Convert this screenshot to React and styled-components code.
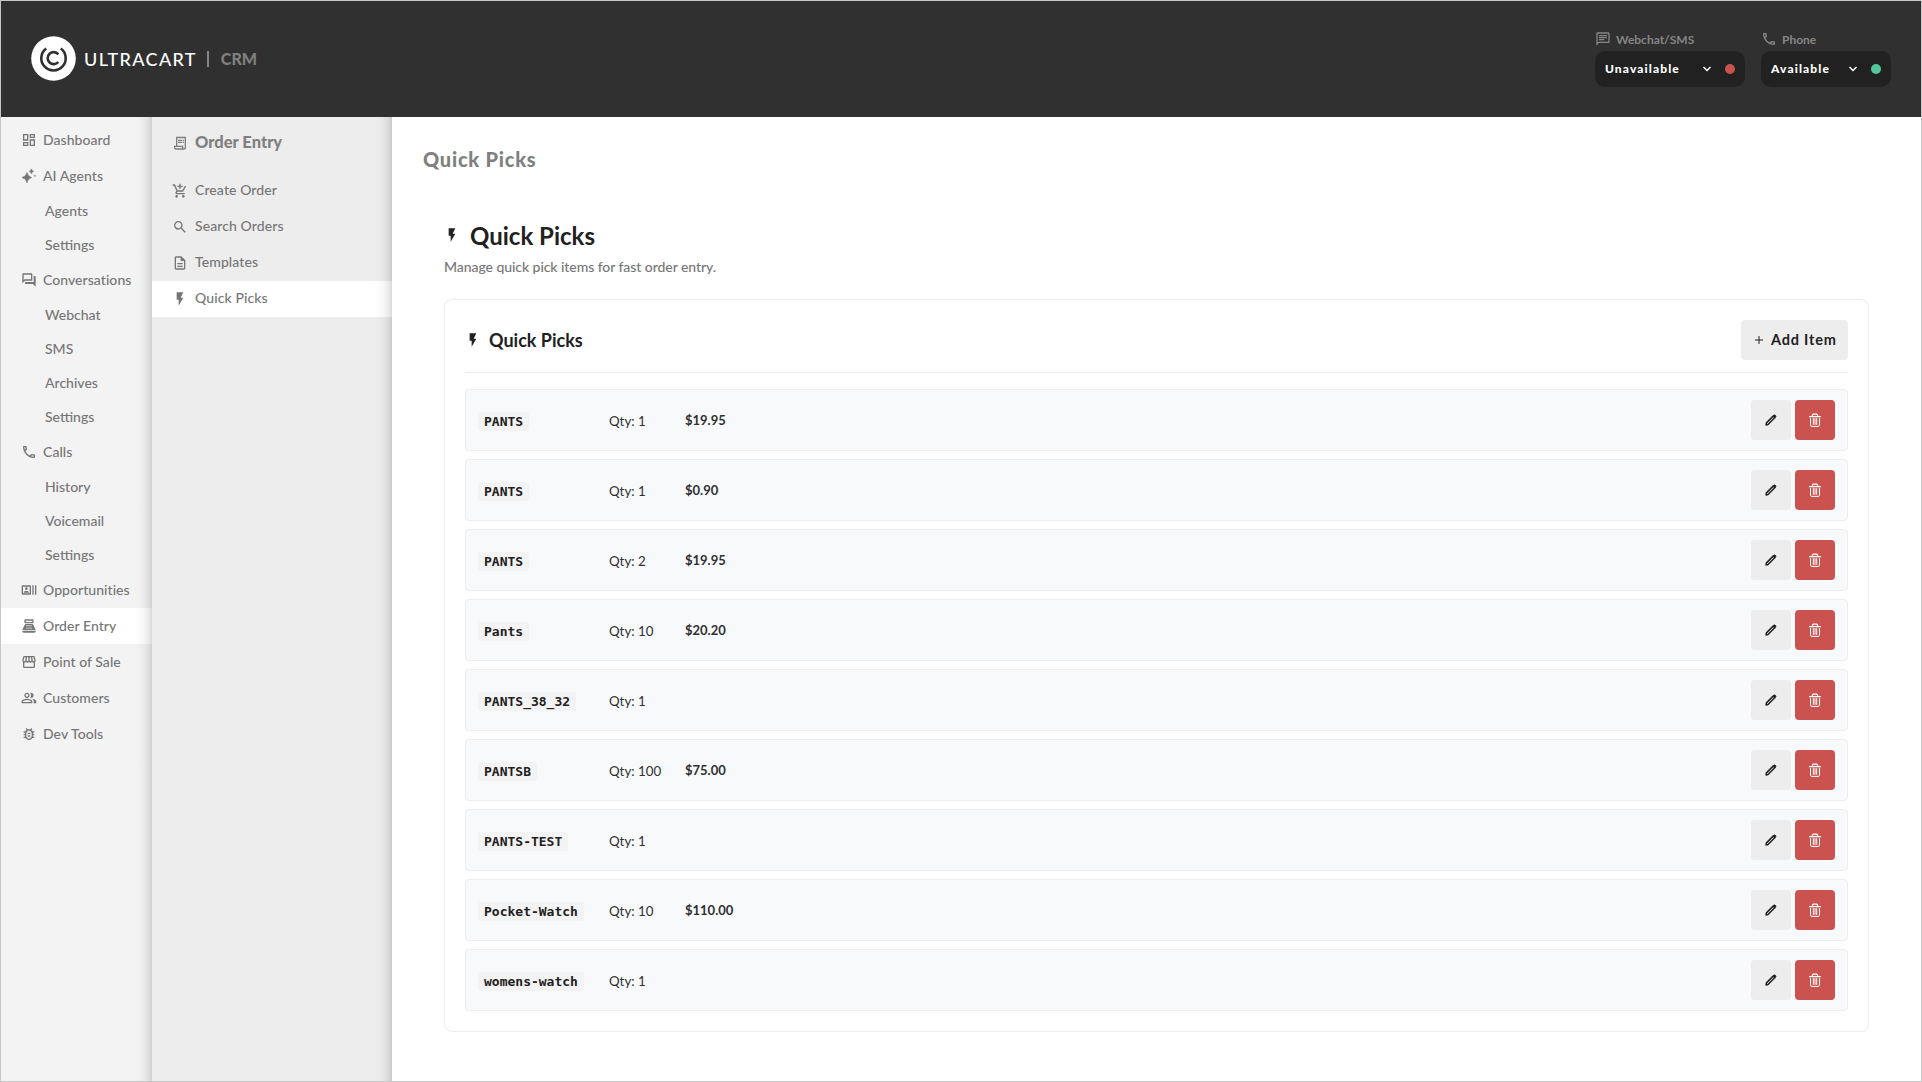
import React from "react";
import styled, { createGlobalStyle } from "styled-components";
import {
  MdOutlineDashboard, MdOutlineForum, MdOutlinePhone, MdOutlineRecentActors, MdPointOfSale,
  MdOutlineStorefront, MdOutlinePeopleAlt, MdOutlineBugReport, MdOutlineReceiptLong,
  MdOutlineAddShoppingCart, MdSearch, MdOutlineDescription, MdFlashOn, MdOutlineChat,
} from "react-icons/md";

const Global = createGlobalStyle`
  *, *::before, *::after { box-sizing: border-box; }
  body { margin: 0; font-family: Lato, "Open Sans", sans-serif; font-size: 14px; color: #212121; background: #fff; }
  h1, h2, h3, p { margin: 0; }
  button { font-family: inherit; border: 0; padding: 0; margin: 0; }
  svg { display: block; flex: none; }
`;

const Frame = styled.div`
  display: flex;
  flex-direction: column;
  width: 1922px;
  height: 1082px;
  border: 1px solid #c6c6c6;
  overflow: hidden;
`;

const Header = styled.header`
  display: flex;
  justify-content: space-between;
  flex: none;
  height: 116px;
  padding: 0 30px;
  background: #303030;
`;

const Brand = styled.div`
  display: flex;
  align-items: center;
  color: #fff;
`;

const Wordmark = styled.span`
  margin-left: 8px;
  font-size: 18px;
  line-height: 24px;
  letter-spacing: 1.35px;
  font-weight: 500;
`;

const Divider = styled.span`
  width: 2px;
  height: 16px;
  margin: 0 12px 0 10px;
  background: #858585;
`;

const Product = styled.span`
  padding-bottom: 2px;
  font-size: 16px;
  font-weight: 900;
  color: #808080;
`;

const Statuses = styled.div`
  display: flex;
  gap: 16px;
  padding-top: 29px;
`;

const StatusLabel = styled.div`
  display: flex;
  align-items: center;
  gap: 5px;
  height: 18px;
  margin-bottom: 3px;
  font-size: 12px;
  font-weight: 700;
  color: #858585;
`;

const StatusSelect = styled.button`
  display: flex;
  align-items: center;
  width: ${(p) => p.$width}px;
  height: 36px;
  padding: 0 10px;
  border-radius: 10px;
  background: #212121;
  color: #fff;
  font-size: 12px;
  font-weight: 900;
  letter-spacing: 1.12px;
`;

const StatusText = styled.span`
  flex: 1;
  padding-bottom: 2px;
  text-align: left;
`;

const Dot = styled.span`
  width: 10px;
  height: 10px;
  margin-left: 14px;
  border-radius: 50%;
  background: ${(p) => p.$color};
`;

const Body = styled.div`
  display: flex;
  flex: 1;
`;

const edgeShade = "linear-gradient(to left, rgba(0,0,0,.15) 0, rgba(0,0,0,.09) 3px, rgba(0,0,0,.035) 8px, rgba(0,0,0,.01) 13px, transparent 18px)";

const SideNav = styled.nav`
  width: 151px;
  padding-top: 5px;
  background: ${edgeShade}, #f3f3f3;
`;

const SubNav = styled.nav`
  width: 240px;
  background: ${edgeShade}, #ededed;
`;

const NavItem = styled.a`
  display: flex;
  align-items: center;
  gap: 6px;
  height: 36px;
  padding-left: 20px;
  font-weight: 500;
  letter-spacing: 0.05px;
  color: #767676;
  background: ${(p) => (p.$active ? `${edgeShade}, #fff` : "none")};
`;

const NavLabel = styled.span`
  padding-bottom: ${(p) => p.$lift || 2}px;
`;

const NavChild = styled.a`
  display: flex;
  align-items: center;
  height: 34px;
  padding: 0 0 2px 44px;
  font-weight: 500;
  color: #767676;
`;

const SubTitle = styled.h3`
  display: flex;
  align-items: center;
  gap: 7px;
  height: 56px;
  padding: 0 0 4px 20px;
  font-size: 16.5px;
  font-weight: 900;
  color: #808080;
`;

const SubItem = styled(NavItem)`
  gap: 7px;
  letter-spacing: 0.1px;
`;

const Content = styled.main`
  flex: 1;
  padding: 30px 52px 0 31px;
`;

const PageLabel = styled.h1`
  font-size: 20px;
  line-height: 24px;
  font-weight: 900;
  letter-spacing: 0.75px;
  color: #808080;
`;

const Section = styled.section`
  padding: 49px 0 0 21px;
`;

const Title = styled.h2`
  display: flex;
  align-items: center;
  gap: 10px;
  height: 30px;
  font-size: 24px;
  font-weight: 700;
`;

const Intro = styled.p`
  margin-top: 8px;
  line-height: 17px;
  font-weight: 500;
  letter-spacing: -0.06px;
  color: #767676;
`;

const Card = styled.div`
  margin-top: 24px;
  height: 733px;
  padding: 20px;
  border: 1px solid #ededed;
  border-radius: 8px;
`;

const CardHeader = styled.div`
  display: flex;
  align-items: center;
  justify-content: space-between;
  height: 53px;
  padding-bottom: 12px;
  border-bottom: 1px solid #ededed;
`;

const CardTitle = styled.h3`
  display: flex;
  align-items: center;
  gap: 8px;
  font-size: 18px;
  font-weight: 700;
`;

const AddButton = styled.button`
  display: flex;
  align-items: center;
  gap: 8px;
  width: 107px;
  height: 40px;
  padding-left: 14px;
  border-radius: 4px;
  background: #ededed;
  color: #212121;
  font-size: 14.5px;
  font-weight: 700;
  letter-spacing: 0.8px;
  white-space: nowrap;
`;

const List = styled.div`
  display: flex;
  flex-direction: column;
  gap: 8px;
  margin-top: 16px;
`;

const Item = styled.div`
  display: grid;
  grid-template-columns: 115px 60px 1fr auto;
  column-gap: 16px;
  align-items: center;
  height: 62px;
  padding: 0 12px;
  border: 1px solid #ededed;
  border-radius: 4px;
  background: #f8f9fb;
`;

const Sku = styled.code`
  justify-self: start;
  height: 19px;
  margin-top: 3px;
  padding: 0 6px;
  border-radius: 3px;
  background: #f3f3f3;
  font-family: "DejaVu Sans Mono", "Liberation Mono", monospace;
  font-size: 13px;
  font-weight: 700;
  line-height: 19px;
`;

const Qty = styled.span`
  padding-top: 1px;
  font-size: 13.3px;
  color: #303030;
`;

const Price = styled.span`
  font-size: 13px;
  font-weight: 700;
  color: #303030;
`;

const Actions = styled.div`
  display: flex;
  gap: 4px;
`;

const IconButton = styled.button`
  display: flex;
  align-items: center;
  justify-content: center;
  width: 40px;
  height: 40px;
  border-radius: 4px;
  background: ${(p) => (p.$danger ? "#cb534f" : "#ededed")};
  color: ${(p) => (p.$danger ? "#fff" : "#212121")};
`;

const LogoMark = styled.svg`
  margin-bottom: 1px;
`;

const Logo = () => (
  <LogoMark width="45" height="45" viewBox="0 0 45 45" fill="none" strokeLinecap="butt">
    <circle cx="22.5" cy="22.5" r="22.3" fill="#fff" />
    <path d="M15.2 12.5a12.2 12.2 0 1 0 14.6 0" stroke="#303030" strokeWidth="2.6" />
    <path d="M27.3 18.3a6 6 0 1 0 0 7.7" stroke="#303030" strokeWidth="2.6" />
  </LogoMark>
);

const Sparkles = () => (
  <svg width="16" height="16" viewBox="0 0 16 16" fill="currentColor">
    <path d="M6 4.6Q6.8 8.6 10.6 9.5 6.8 10.4 6 14.8 5.2 10.4 1 9.5 5.2 8.6 6 4.6z" stroke="currentColor" strokeWidth=".7" />
    <path d="M10.4.9Q10.9 3 12.8 3.3 10.9 3.7 10.4 5.9 9.9 3.7 8 3.3 9.9 3 10.4.9z" stroke="currentColor" strokeWidth=".5" />
    <path d="M13.9 6.4 14.3 7.4 15.3 7.8 14.3 8.2 13.9 9.2 13.5 8.2 12.5 7.8 13.5 7.4z" />
  </svg>
);

const Chevron = () => (
  <svg width="8" height="6" viewBox="0 0 8 6" fill="none" stroke="currentColor" strokeWidth="1.5">
    <path d="M.5 1 4 4.5 7.5 1" />
  </svg>
);

const Plus = () => (
  <svg width="8" height="8" viewBox="0 0 8 8" stroke="currentColor" strokeWidth="1">
    <path d="M0 4h8M4 0v8" />
  </svg>
);

const Pencil = () => (
  <svg width="14" height="14" viewBox="0 0 14 14" fill="none" stroke="currentColor">
    <path d="M2.4 9.9 9.4 2.9 11 4.5 4 11.5 2.1 11.9z" strokeWidth="1.5" strokeLinejoin="round" />
    <path d="M9.2 3.2 10.6 1.8 12.1 3.3 10.7 4.7z" fill="currentColor" strokeWidth="1" strokeLinejoin="round" />
  </svg>
);

const Trash = () => (
  <svg width="14" height="14" viewBox="0 0 14 14" fill="none" stroke="currentColor">
    <path d="M1 3.6h12M4.4 3.4V2.2q0-1 1-1h3.2q1 0 1 1v1.2" strokeWidth="1.2" />
    <path d="M2.5 5v7.2q0 1.2 1.2 1.2h6.6q1.2 0 1.2-1.2V5M5.3 5.2v6.6M7 5.2v6.6M8.7 5.2v6.6" strokeWidth="1" />
  </svg>
);

const NAV = [
  { label: "Dashboard", Icon: MdOutlineDashboard },
  { label: "AI Agents", Icon: Sparkles, children: ["Agents", "Settings"] },
  { label: "Conversations", Icon: MdOutlineForum, children: ["Webchat", "SMS", "Archives", "Settings"] },
  { label: "Calls", Icon: MdOutlinePhone, children: ["History", "Voicemail", "Settings"] },
  { label: "Opportunities", Icon: MdOutlineRecentActors },
  { label: "Order Entry", Icon: MdPointOfSale, active: true },
  { label: "Point of Sale", Icon: MdOutlineStorefront },
  { label: "Customers", Icon: MdOutlinePeopleAlt },
  { label: "Dev Tools", Icon: MdOutlineBugReport },
];

const SUBNAV = [
  { label: "Create Order", Icon: MdOutlineAddShoppingCart },
  { label: "Search Orders", Icon: MdSearch },
  { label: "Templates", Icon: MdOutlineDescription },
  { label: "Quick Picks", Icon: MdFlashOn, active: true },
];

const ITEMS = [
  ["PANTS", 1, "$19.95"],
  ["PANTS", 1, "$0.90"],
  ["PANTS", 2, "$19.95"],
  ["Pants", 10, "$20.20"],
  ["PANTS_38_32", 1, ""],
  ["PANTSB", 100, "$75.00"],
  ["PANTS-TEST", 1, ""],
  ["Pocket-Watch", 10, "$110.00"],
  ["womens-watch", 1, ""],
];

export default function App() {
  return (
    <Frame>
      <Global />
      <Header>
        <Brand>
          <Logo />
          <Wordmark>ULTRACART</Wordmark>
          <Divider />
          <Product>CRM</Product>
        </Brand>
        <Statuses>
          <div>
            <StatusLabel><MdOutlineChat size={16} />Webchat/SMS</StatusLabel>
            <StatusSelect $width={150}>
              <StatusText>Unavailable</StatusText><Chevron /><Dot $color="#cb534f" />
            </StatusSelect>
          </div>
          <div>
            <StatusLabel><MdOutlinePhone size={16} />Phone</StatusLabel>
            <StatusSelect $width={130}>
              <StatusText>Available</StatusText><Chevron /><Dot $color="#54c89b" />
            </StatusSelect>
          </div>
        </Statuses>
      </Header>
      <Body>
        <SideNav>
          {NAV.map(({ label, Icon, active, children = [] }) => (
            <React.Fragment key={label}>
              <NavItem $active={active}><Icon size={16} /><NavLabel>{label}</NavLabel></NavItem>
              {children.map((c) => <NavChild key={c}>{c}</NavChild>)}
            </React.Fragment>
          ))}
        </SideNav>
        <SubNav>
          <SubTitle><MdOutlineReceiptLong size={16} /><NavLabel $lift={3}>Order Entry</NavLabel></SubTitle>
          {SUBNAV.map(({ label, Icon, active }) => (
            <SubItem key={label} $active={active}><Icon size={16} /><NavLabel $lift={3}>{label}</NavLabel></SubItem>
          ))}
        </SubNav>
        <Content>
          <PageLabel>Quick Picks</PageLabel>
          <Section>
            <Title><MdFlashOn size={16} />Quick Picks</Title>
            <Intro>Manage quick pick items for fast order entry.</Intro>
            <Card>
              <CardHeader>
                <CardTitle><MdFlashOn size={16} />Quick Picks</CardTitle>
                <AddButton><Plus /><NavLabel>Add Item</NavLabel></AddButton>
              </CardHeader>
              <List>
                {ITEMS.map(([sku, qty, price], i) => (
                  <Item key={i}>
                    <Sku>{sku}</Sku>
                    <Qty>Qty: {qty}</Qty>
                    <Price>{price}</Price>
                    <Actions>
                      <IconButton><Pencil /></IconButton>
                      <IconButton $danger><Trash /></IconButton>
                    </Actions>
                  </Item>
                ))}
              </List>
            </Card>
          </Section>
        </Content>
      </Body>
    </Frame>
  );
}
